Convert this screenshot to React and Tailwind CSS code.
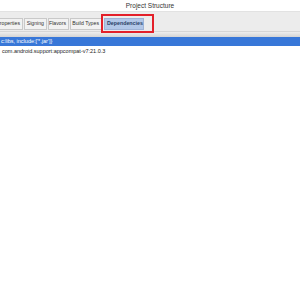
import React from "react";

const tabs = [
  { name: "Properties", w: "w-[27px]" },
  { name: "Signing", w: "w-[23px]" },
  { name: "Flavors", w: "w-[21px]" },
  { name: "Build Types", w: "w-[32px]" },
];

function App() {
  return (
    <div
      className="w-[300px] h-[300px] bg-white overflow-hidden relative"
      style={{ fontFamily: '"Liberation Sans", Arial, sans-serif' }}
    >
      {/* title */}
      <div className="h-[12px] flex items-center justify-center text-[6.5px] text-[#333] border-b border-[#e2e2e2]">
        Project Structure
      </div>

      {/* tab strip */}
      <div className="h-[19px] bg-[#ececec] flex items-end pb-[1px] gap-[1px] ml-[-4px]">
        {tabs.map((t) => (
          <div
            key={t.name}
            className={`${t.w} h-[12px] flex items-center justify-end pr-[2px] text-[5.2px] text-[#333] bg-[#f2f2f2] border border-[#c9c9c9] overflow-hidden whitespace-nowrap`}
          >
            {t.name}
          </div>
        ))}
        <div className="w-[40px] h-[12px] ml-[1px] flex items-center px-[2px] text-[5.3px] text-[#2a3f66] bg-[#b2c7e8] border border-[#9fb3d6] whitespace-nowrap font-bold">
          Dependencies
        </div>
      </div>
      <div className="h-[6px] bg-gradient-to-b from-[#eeeeee] to-[#d4d4d4] border-t border-[#d6d6d6]"></div>

      {/* list */}
      <div className="h-[9px] bg-[#3877d8] flex items-center pl-[1px] text-[5.5px] text-white whitespace-nowrap">
        c:libs, include:['*.jar']}
      </div>
      <div className="h-[11px] flex items-center pl-[2px] text-[5.5px] text-[#222] whitespace-nowrap">
        com.android.support:appcompat-v7:21.0.3
      </div>

      {/* red highlight */}
      <div className="absolute left-[101px] top-[14px] w-[53px] h-[19px] border-2 border-[#e3202a]"></div>
    </div>
  );
}

export default App;
